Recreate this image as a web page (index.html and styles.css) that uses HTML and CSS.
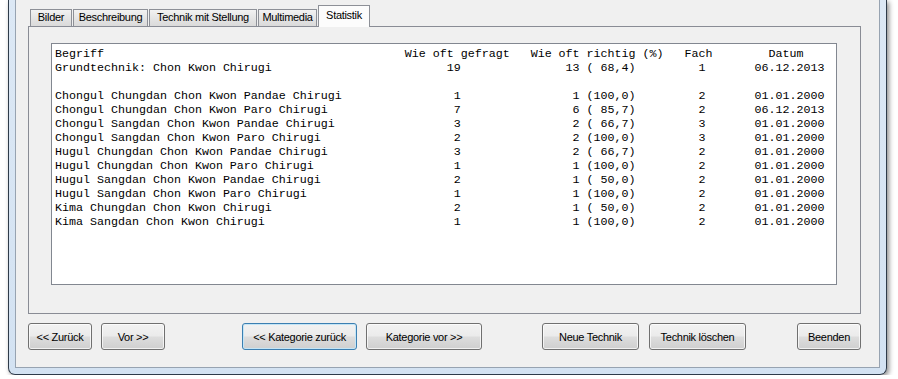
FILE: index.html
```html
<!DOCTYPE html>
<html lang="de">
<head>
  <meta charset="UTF-8">
  <title>Statistik</title>
  <link rel="stylesheet" href="styles.css">
</head>
<body>
  <div class="window">
    <div class="client">
      <div class="tabs">
        <div class="tab tab-bilder">Bilder</div>
        <div class="tab tab-beschreibung">Beschreibung</div>
        <div class="tab tab-stellung">Technik mit Stellung</div>
        <div class="tab tab-multimedia">Multimedia</div>
        <div class="tab tab-statistik active">Statistik</div>
      </div>
      <div class="tab-panel">
        <div class="listbox">
          <div class="row head">
            <span class="c-name">Begriff</span><span class="c-asked">Wie oft gefragt</span><span class="c-right">Wie oft richtig (%)</span><span class="c-fach">Fach</span><span class="c-date">Datum</span>
          </div>
          <div class="row">
            <span class="c-name">Grundtechnik: Chon Kwon Chirugi</span><span class="c-asked">19</span><span class="c-right">13 ( 68,4)</span><span class="c-fach">1</span><span class="c-date">06.12.2013</span>
          </div>
          <div class="row empty"></div>
          <div class="row">
            <span class="c-name">Chongul Chungdan Chon Kwon Pandae Chirugi</span><span class="c-asked">1</span><span class="c-right">1 (100,0)</span><span class="c-fach">2</span><span class="c-date">01.01.2000</span>
          </div>
          <div class="row">
            <span class="c-name">Chongul Chungdan Chon Kwon Paro Chirugi</span><span class="c-asked">7</span><span class="c-right">6 ( 85,7)</span><span class="c-fach">2</span><span class="c-date">06.12.2013</span>
          </div>
          <div class="row">
            <span class="c-name">Chongul Sangdan Chon Kwon Pandae Chirugi</span><span class="c-asked">3</span><span class="c-right">2 ( 66,7)</span><span class="c-fach">3</span><span class="c-date">01.01.2000</span>
          </div>
          <div class="row">
            <span class="c-name">Chongul Sangdan Chon Kwon Paro Chirugi</span><span class="c-asked">2</span><span class="c-right">2 (100,0)</span><span class="c-fach">3</span><span class="c-date">01.01.2000</span>
          </div>
          <div class="row">
            <span class="c-name">Hugul Chungdan Chon Kwon Pandae Chirugi</span><span class="c-asked">3</span><span class="c-right">2 ( 66,7)</span><span class="c-fach">2</span><span class="c-date">01.01.2000</span>
          </div>
          <div class="row">
            <span class="c-name">Hugul Chungdan Chon Kwon Paro Chirugi</span><span class="c-asked">1</span><span class="c-right">1 (100,0)</span><span class="c-fach">2</span><span class="c-date">01.01.2000</span>
          </div>
          <div class="row">
            <span class="c-name">Hugul Sangdan Chon Kwon Pandae Chirugi</span><span class="c-asked">2</span><span class="c-right">1 ( 50,0)</span><span class="c-fach">2</span><span class="c-date">01.01.2000</span>
          </div>
          <div class="row">
            <span class="c-name">Hugul Sangdan Chon Kwon Paro Chirugi</span><span class="c-asked">1</span><span class="c-right">1 (100,0)</span><span class="c-fach">2</span><span class="c-date">01.01.2000</span>
          </div>
          <div class="row">
            <span class="c-name">Kima Chungdan Chon Kwon Chirugi</span><span class="c-asked">2</span><span class="c-right">1 ( 50,0)</span><span class="c-fach">2</span><span class="c-date">01.01.2000</span>
          </div>
          <div class="row">
            <span class="c-name">Kima Sangdan Chon Kwon Chirugi</span><span class="c-asked">1</span><span class="c-right">1 (100,0)</span><span class="c-fach">2</span><span class="c-date">01.01.2000</span>
          </div>
        </div>
      </div>
      <div class="button-bar">
        <div class="btn-group">
          <button class="btn btn-sm">&lt;&lt; Zurück</button>
          <button class="btn btn-sm">Vor &gt;&gt;</button>
        </div>
        <div class="btn-group group-category">
          <button class="btn btn-lg focused">&lt;&lt; Kategorie zurück</button>
          <button class="btn btn-lg">Kategorie vor &gt;&gt;</button>
        </div>
        <div class="btn-group group-technik">
          <button class="btn btn-md">Neue Technik</button>
          <button class="btn btn-md">Technik löschen</button>
        </div>
        <div class="btn-group group-end">
          <button class="btn btn-sm">Beenden</button>
        </div>
      </div>
    </div>
  </div>
</body>
</html>
```

FILE: styles.css
```css
body {
  margin: 0;
  background-color: #ffffff;
  font-family: "Liberation Sans", Arial, sans-serif;
  font-size: 11px;
  color: #000;
}
.window {
  box-sizing: border-box;
  width: 879px;
  margin-left: 8px;
  padding: 0 6px 6px;
  border: 1px solid #2e3b4a;
  border-top: none;
  border-radius: 0 0 7px 7px;
  background: linear-gradient(to bottom, #dce8f5, #d3e2f2);
  box-shadow: 2px 2px 5px rgba(0, 0, 0, 0.45);
}
.client {
  padding: 5px 18px 17px 12px;
  border: 1px solid #97a3b1;
  border-top: none;
  background-color: #f0f0f0;
}

/* tabs */
.tabs {
  display: flex;
  align-items: flex-end;
  gap: 1px;
  padding-left: 2px;
  margin-bottom: -1px;
  position: relative;
  z-index: 1;
}
.tab {
  box-sizing: border-box;
  height: 17px;
  margin-bottom: 1px;
  line-height: 15px;
  text-align: center;
  letter-spacing: -0.3px;
  border: 1px solid #8d9097;
  border-bottom: none;
  background: linear-gradient(to bottom, #f2f2f2, #e5e5e5 50%, #dadada);
}
.tab.active {
  height: 22px;
  margin-bottom: 0;
  padding-top: 2px;
  background: #fcfcfc;
}
.tab-bilder { width: 42px; }
.tab-beschreibung { width: 75px; }
.tab-stellung { width: 108px; }
.tab-multimedia { width: 59px; }
.tab-statistik { width: 52px; }

.tab-panel {
  box-sizing: border-box;
  height: 288px;
  padding: 16px 23px 0 22px;
  border: 1px solid #898c95;
  background-color: #f0f0f0;
}

/* list */
.listbox {
  box-sizing: border-box;
  height: 242px;
  padding: 3px;
  border: 1px solid #828790;
  background-color: #fff;
  font-family: "Liberation Mono", "Courier New", monospace;
  font-size: 11.67px;
}
.row {
  display: flex;
  height: 14px;
  line-height: 14px;
  white-space: pre;
}
.row span {
  box-sizing: border-box;
  flex: none;
}
.c-name { width: 50ch; }
.c-asked { width: 15ch; padding-right: 7ch; text-align: right; }
.c-right { width: 19ch; margin-left: 3ch; padding-right: 4ch; text-align: right; }
.c-fach { width: 4ch; margin-left: 3ch; padding-right: 1ch; text-align: right; }
.c-date { width: 10ch; margin-left: 6ch; }
.head span {
  padding-right: 0;
  text-align: left;
}
.head .c-date { padding-left: 2ch; }

/* buttons */
.button-bar {
  display: flex;
  margin-top: 9px;
}
.btn-group {
  display: flex;
  gap: 9px;
}
.group-category { margin-left: 77px; }
.group-technik { margin-left: 60px; gap: 10px; }
.group-end { margin-left: auto; }
.btn {
  box-sizing: border-box;
  height: 27px;
  padding: 0;
  font-family: inherit;
  font-size: 11px;
  letter-spacing: -0.3px;
  color: #000;
  border: 1px solid #707070;
  border-radius: 3px;
  background: linear-gradient(to bottom, #f2f2f2 0%, #ebebeb 48%, #dddddd 52%, #cfcfcf 100%);
  box-shadow: inset 0 0 0 1px rgba(255, 255, 255, 0.7);
}
.btn.focused {
  border-color: #3c7fb1;
  box-shadow: inset 0 0 0 1px #c4e5f6;
}
.btn-sm { width: 64px; }
.btn-md { width: 97px; }
.btn-lg { width: 115px; }
.btn-lg + .btn-lg { width: 116px; }
```
